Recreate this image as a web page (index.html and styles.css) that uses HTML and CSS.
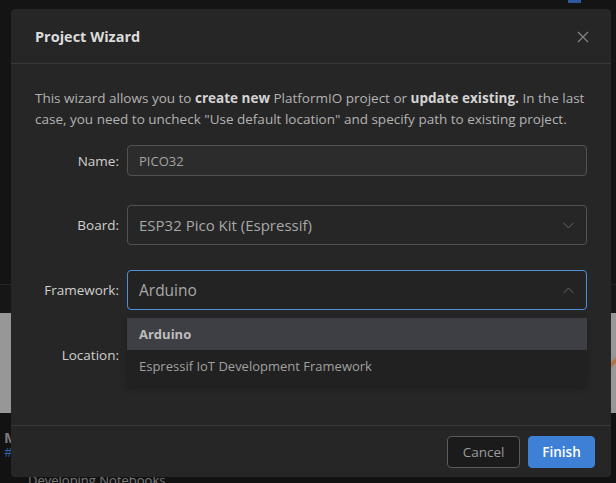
FILE: index.html
```html
<!DOCTYPE html>
<html>
<head>
<meta charset="utf-8">
<link rel="stylesheet" href="styles.css">
</head>
<body>
<div class="app">
  <div class="app-top"><span class="top-badge"></span></div>
  <div class="app-band"></div>
  <div class="app-media"><span class="media-mark"></span></div>
  <div class="app-text">
    <div class="app-title">M</div>
    <div class="app-tag">#</div>
    <div class="app-line">Developing Notebooks</div>
  </div>
</div>

<div class="modal">
  <div class="modal-header">
    <div class="modal-title">Project Wizard</div>
    <svg class="close" width="12" height="12" viewBox="0 0 12 12"><path d="M1 1L11 11M11 1L1 11" stroke="#858585" stroke-width="1.2" fill="none"/></svg>
  </div>
  <div class="modal-body">
    <p class="desc">This wizard allows you to <b>create new</b> PlatformIO project or <b>update existing.</b> In the last case, you need to uncheck "Use default location" and specify path to existing project.</p>
    <div class="form">
      <div class="row row-name">
        <label class="label">Name:</label>
        <div class="input input-name">PICO32</div>
      </div>
      <div class="row">
        <label class="label">Board:</label>
        <div class="input select">ESP32 Pico Kit (Espressif)
          <svg class="chev" width="11" height="7" viewBox="0 0 11 7"><path d="M0.5 0.8L5.5 6L10.5 0.8" stroke="#666" stroke-width="1" fill="none"/></svg>
        </div>
      </div>
      <div class="row">
        <label class="label">Framework:</label>
        <div class="control">
          <div class="input select focus">Arduino
            <svg class="chev" width="11" height="7" viewBox="0 0 11 7"><path d="M0.5 6.2L5.5 1L10.5 6.2" stroke="#666" stroke-width="1" fill="none"/></svg>
          </div>
          <div class="dropdown">
            <div class="opt active">Arduino</div>
            <div class="opt">Espressif IoT Development Framework</div>
          </div>
        </div>
      </div>
      <div class="row">
        <label class="label">Location:</label>
        <div class="input select"></div>
      </div>
    </div>
  </div>
  <div class="modal-footer">
    <button class="btn btn-cancel">Cancel</button>
    <button class="btn btn-primary">Finish</button>
  </div>
</div>
</body>
</html>
```
FILE: styles.css
```css
html, body {
  margin: 0;
  padding: 0;
}
body {
  width: 616px;
  height: 483px;
  overflow: hidden;
  background: #121212;
  font-family: "Open Sans", "Noto Sans", sans-serif;
  position: relative;
}
.app {
  display: flex;
  flex-direction: column;
  height: 483px;
}
.app-top {
  height: 284px;
  border-bottom: 1px solid #262626;
  background: #141414;
  position: relative;
  flex-shrink: 0;
}
.top-badge {
  position: absolute;
  left: 568px;
  top: 0;
  width: 13px;
  height: 3px;
  background: #2b5b9c;
}
.app-band {
  height: 28px;
  background: #161616;
  flex-shrink: 0;
}
.app-media {
  height: 100px;
  background: #979797;
  position: relative;
  flex-shrink: 0;
}
.media-mark {
  position: absolute;
  right: 0;
  top: 10px;
  width: 6px;
  height: 80px;
  background: linear-gradient(135deg, transparent 45%, #b86a2a 50%, transparent 55%);
}
.app-text {
  padding: 16px 0 0 4px;
  color: #7a7a7a;
  font-size: 13px;
  flex-shrink: 0;
}
.app-title {
  font-weight: bold;
  font-size: 15px;
  line-height: 16px;
}
.app-tag {
  color: #2e5f9e;
  line-height: 15px;
}
.app-line {
  margin-top: 12px;
  padding-left: 24px;
  line-height: 16px;
}

.modal {
  position: absolute;
  left: 11px;
  top: 9px;
  width: 600px;
  height: 468px;
  background: #262626;
  border-radius: 4px;
  display: flex;
  flex-direction: column;
  box-sizing: border-box;
}
.modal-header {
  height: 54px;
  border-bottom: 1px solid #3a3a3a;
  display: flex;
  align-items: center;
  justify-content: space-between;
  padding: 0 22px 0 24px;
  flex-shrink: 0;
}
.modal-title {
  font-size: 14.5px;
  font-weight: 700;
  color: #dcdcdc;
  margin-top: 1px;
}
.close {
  margin-top: 2px;
}
.modal-body {
  flex: 1;
  padding: 24px 24px 0 24px;
}
.desc {
  margin: 0;
  font-size: 13.5px;
  line-height: 21px;
  color: #b3b3b3;
}
.desc b {
  color: #d4d4d4;
  font-weight: 700;
}
.form {
  margin-top: 15px;
  display: flex;
  flex-direction: column;
  gap: 25px;
}
.row {
  display: grid;
  grid-template-columns: 84px 1fr;
  column-gap: 8px;
  align-items: center;
}
.row-name {
  margin-bottom: 4px;
}
.label {
  text-align: right;
  font-size: 13.5px;
  color: #cfcfcf;
}
.control {
  position: relative;
}
.input {
  box-sizing: border-box;
  height: 40px;
  border: 1px solid #525252;
  border-radius: 4px;
  background: #262626;
  padding: 0 11px;
  display: flex;
  align-items: center;
  color: #a8a8a8;
  font-size: 15px;
  position: relative;
}
.input-name {
  height: 31px;
  background: #2c2c2c;
  font-size: 13px;
  color: #a4a4a4;
}
.select.focus {
  border-color: #4b8fd8;
  background: #232323;
  font-size: 15.5px;
}
.chev {
  position: absolute;
  right: 12px;
  top: 16px;
}
.dropdown {
  position: absolute;
  left: 0;
  right: 0;
  top: 48px;
  background: #212121;
  box-shadow: 0 2px 6px rgba(0,0,0,0.25);
  z-index: 2;
}
.opt {
  height: 32px;
  line-height: 32px;
  padding: 0 12px;
  font-size: 13px;
  color: #a0a0a0;
}
.opt:last-child {
  height: 36px;
  line-height: 32px;
}
.opt.active {
  background: #3e3f44;
  color: #bdbdbd;
  font-weight: 700;
}
.modal-footer {
  height: 52px;
  border-top: 1px solid #3a3a3a;
  display: flex;
  justify-content: flex-end;
  align-items: center;
  gap: 8px;
  padding: 0 16px;
  flex-shrink: 0;
  box-sizing: border-box;
}
.btn {
  height: 32px;
  border-radius: 4px;
  font-family: "Open Sans", "Noto Sans", sans-serif;
  font-size: 13.5px;
  padding: 0;
  cursor: pointer;
}
.btn-cancel {
  width: 73px;
  background: #1b1b1b;
  border: 1px solid #5c5c5c;
  color: #9c9c9c;
}
.btn-primary {
  width: 67px;
  background: #3d80d5;
  border: 1px solid #3d80d5;
  color: #ffffff;
  font-weight: 600;
}
```
